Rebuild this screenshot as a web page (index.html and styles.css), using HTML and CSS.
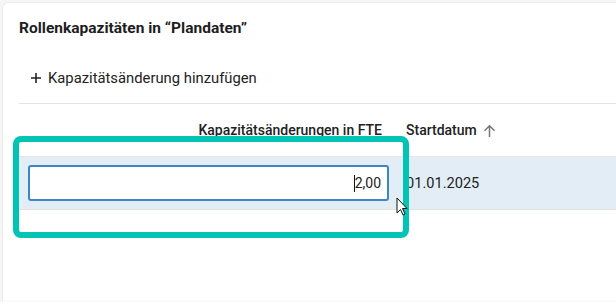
FILE: index.html
```html
<!DOCTYPE html>
<html lang="de">
<head>
<meta charset="utf-8">
<link rel="stylesheet" href="styles.css">
</head>
<body>
<div class="card">
  <h2 class="title">Rollenkapazitäten in “Plandaten”</h2>
  <div class="toolbar">
    <button class="add-btn" type="button">
      <svg class="plus" width="12" height="12" viewBox="0 0 12 12"><path d="M6 1v10M1 6h10" stroke="#222" stroke-width="1.6" fill="none"/></svg>
      <span>Kapazitätsänderung hinzufügen</span>
    </button>
  </div>
  <div class="table">
    <div class="row head">
      <div class="cell c1">Kapazitätsänderungen in FTE</div>
      <div class="cell c2">Startdatum
        <svg class="sort" width="13" height="14" viewBox="0 0 13 14"><path d="M6.5 13V1.8M1.5 6.8L6.5 1.8 11.5 6.8" stroke="#777" stroke-width="1.5" fill="none"/></svg>
      </div>
    </div>
    <div class="row data">
      <div class="cell c1">
        <div class="input"><span class="caret"></span>2,00</div>
      </div>
      <div class="cell c2">01.01.2025</div>
    </div>
  </div>
  <div class="highlight"></div>
  <svg class="pointer" width="12" height="20" viewBox="0 0 12 20"><path d="M1 1v15l3.5-3.5 2.5 5.5 2-1-2.5-5.5H11z" fill="#fff" stroke="#111" stroke-width="1" stroke-linejoin="round"/></svg>
</div>
</body>
</html>
```
FILE: styles.css
```css
html, body { margin: 0; padding: 0; }
body {
  width: 616px;
  height: 302px;
  overflow: hidden;
  background: #f6f6f6;
  font-family: Roboto, "Liberation Sans", sans-serif;
  color: #222;
  padding: 2px 0 0 2px;
  box-sizing: border-box;
}
.card {
  position: relative;
  background: #fff;
  border: 1px solid #ebebeb;
  border-right: none;
  border-bottom: none;
  border-radius: 6px 0 0 0;
  height: 299px;
  box-sizing: border-box;
  padding: 0 0 0 16px;
}
.title {
  margin: 0;
  padding-top: 15px;
  font-size: 15.5px;
  line-height: 20px;
  font-weight: 700;
  color: #1e1e1e;
}
.toolbar {
  margin-top: 30px;
  height: 35px;
  border-bottom: 1px solid #e3e3e3;
}
.add-btn {
  display: flex;
  align-items: center;
  gap: 6px;
  background: none;
  border: none;
  padding: 0 0 0 11px;
  font-family: inherit;
  font-size: 14.8px;
  line-height: 20px;
  color: #222;
  cursor: pointer;
}
.table { display: flex; flex-direction: column; }
.row { display: flex; height: 52px; align-items: center; }
.row.head { border-bottom: 1px solid #e6e6e6; font-weight: 500; font-size: 14px; color: #222; }
.row.data { background: #e3edf6; border-bottom: 1px solid #e2e2e2; font-size: 14.6px; }
.cell { box-sizing: border-box; }
.c1 { width: 379px; }
.head .c1 { text-align: right; padding-right: 16px; }
.data .c1 { padding: 0 9px; }
.c2 { padding-left: 8px; display: flex; align-items: center; gap: 6px; }
.data .c2 { padding-left: 8px; color: #222; }
.sort { margin-top: 2px; }
.input {
  height: 36px;
  box-sizing: border-box;
  border: 2px solid #3d86c6;
  border-radius: 3px;
  background: #fff;
  display: flex;
  justify-content: flex-end;
  align-items: center;
  padding-right: 6px;
  font-size: 14px;
  color: #222;
}
.caret {
  display: inline-block;
  width: 1px;
  height: 17px;
  background: #111;
}
.highlight {
  position: absolute;
  left: 10px;
  top: 133px;
  width: 396px;
  height: 102px;
  box-sizing: border-box;
  border: 6px solid #00c4b4;
  border-radius: 8px;
  pointer-events: none;
}
.pointer {
  position: absolute;
  left: 393px;
  top: 194px;
}
```
